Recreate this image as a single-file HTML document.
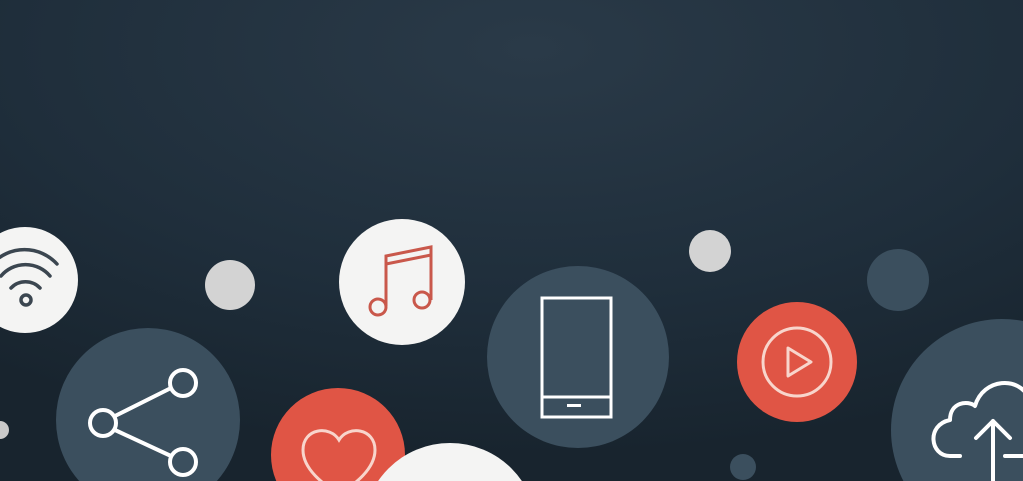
<!DOCTYPE html>
<html><head><meta charset="utf-8"><style>html,body{margin:0;padding:0;width:1023px;height:481px;overflow:hidden;background:#1c2a36}svg{display:block}</style></head><body>
<svg width="1023" height="481" viewBox="0 0 1023 481" xmlns="http://www.w3.org/2000/svg">
<defs>
<radialGradient id="bg" cx="0.52" cy="0.1" r="0.85">
<stop offset="0" stop-color="#2a3a48"/><stop offset="0.6" stop-color="#1f2e3b"/><stop offset="1" stop-color="#18242e"/>
</radialGradient>
</defs>
<rect width="1023" height="481" fill="url(#bg)"/>
<circle cx="25" cy="280" r="53" fill="#f4f4f3"/>
<g fill="none" stroke="#3b4650" stroke-width="3.5" stroke-linecap="round">
<path d="M-8 264 A44 44 0 0 1 57 264"/>
<path d="M1 276 A32 32 0 0 1 50 276"/>
<path d="M11 288 A20 20 0 0 1 40 288"/>
<circle cx="26" cy="300" r="5"/>
</g>
<circle cx="230" cy="285" r="25" fill="#d3d3d3"/>
<circle cx="0" cy="430" r="9" fill="#c9c9c9"/>
<circle cx="402" cy="282" r="63" fill="#f4f4f3"/>
<g fill="none" stroke="#c9584b" stroke-width="3">
<path d="M386 306 V256 L431 247 V300"/>
<path d="M386 264 L431 255"/>
<circle cx="378" cy="307" r="8"/>
<circle cx="422" cy="300" r="8"/>
</g>
<circle cx="148" cy="420" r="92" fill="#3b4f5e"/>
<g fill="none" stroke="#fff" stroke-width="4">
<path d="M115 416 L171 388 M115 430 L171 456"/>
<circle cx="183" cy="383" r="13"/>
<circle cx="103" cy="423" r="13"/>
<circle cx="183" cy="462" r="13"/>
</g>
<circle cx="338" cy="455" r="67" fill="#e05545"/>
<path d="M339 440 C330 425 303 428 303 450 C303 470 325 485 339 495 C353 485 375 470 375 450 C375 428 348 425 339 440 Z" fill="none" stroke="#f8d5cc" stroke-width="3"/>
<circle cx="450" cy="530" r="87" fill="#f4f4f3"/>
<circle cx="578" cy="357" r="91" fill="#3b4f5e"/>
<g fill="none" stroke="#fff" stroke-width="3">
<rect x="542" y="298" width="69" height="119"/>
<path d="M542 397 H611"/>
</g>
<rect x="567" y="404" width="14" height="3" fill="#fff"/>
<circle cx="710" cy="251" r="21" fill="#d3d3d3"/>
<circle cx="898" cy="280" r="31" fill="#3b4f5e"/>
<circle cx="797" cy="362" r="60" fill="#e05545"/>
<circle cx="797" cy="362" r="34" fill="none" stroke="#f8d5cc" stroke-width="3"/>
<path d="M788 348 L811 362 L788 376 Z" fill="none" stroke="#f8d5cc" stroke-width="3" stroke-linejoin="round"/>
<circle cx="743" cy="467" r="13" fill="#3b4f5e"/>
<circle cx="1002" cy="430" r="111" fill="#3b4f5e"/>
<g fill="none" stroke="#fff" stroke-width="4" stroke-linecap="round" stroke-linejoin="round">
<path d="M960 456 H950 C930 456 926 425 950 420 C950 402 968 400 975 406 C983 378 1020 375 1030 400"/>
<path d="M976 438 L993 421 L1010 438 M993 421 V481"/>
<path d="M1005 456 H1023"/>
</g>
</svg>
</body></html>
